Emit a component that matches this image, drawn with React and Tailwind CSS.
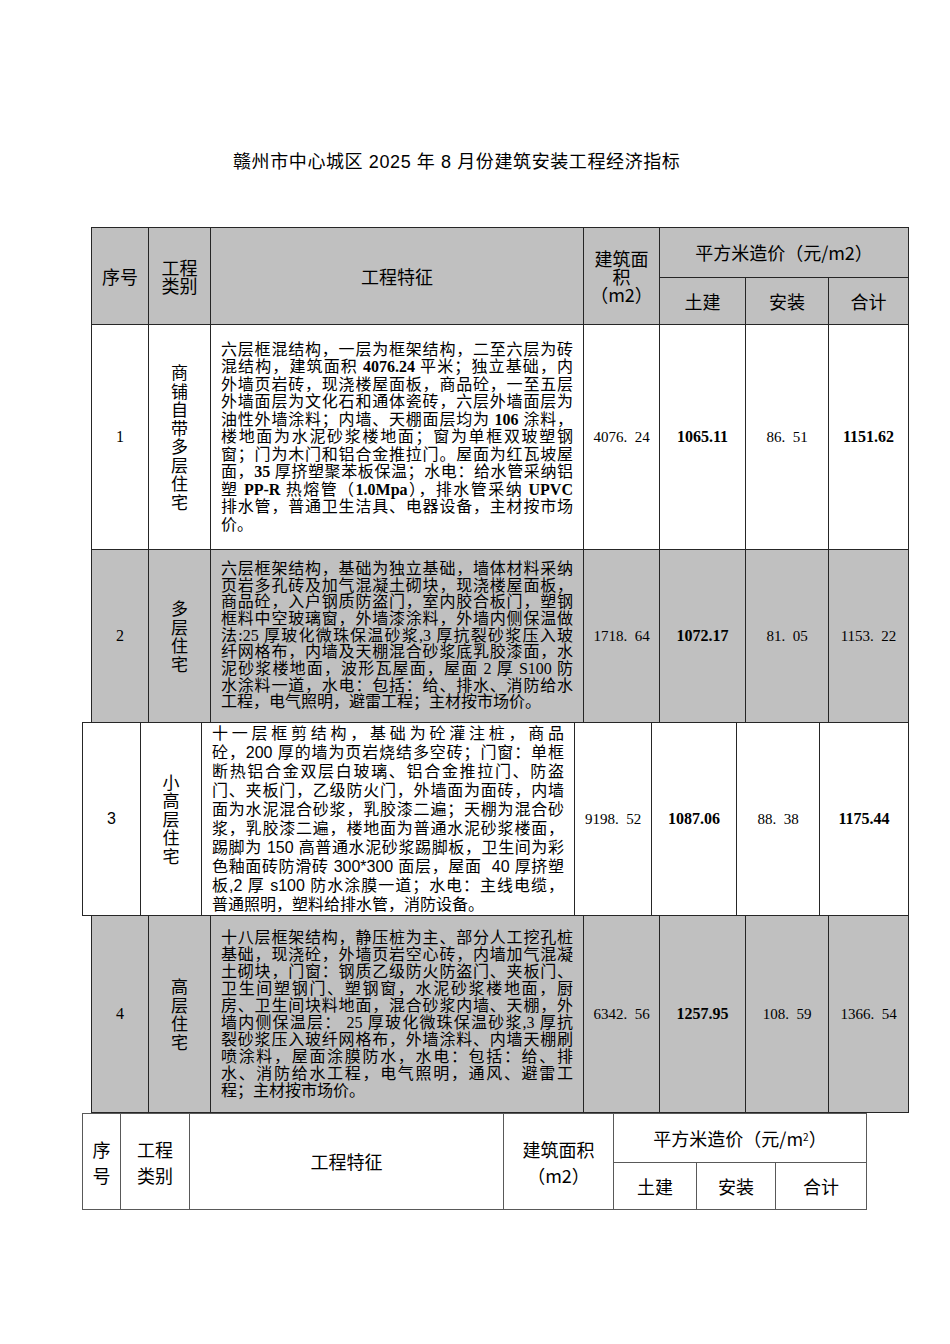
const serif = "font-['Liberation_Serif','Noto_Sans_CJK_SC',serif]";
const sans = "font-['Liberation_Sans','Noto_Sans_CJK_SC',sans-serif]";

const row1 = [
  '六层框混结构，一层为框架结构，二至六层为砖',
  <>混结构，建筑面积 <b>4076.24</b> 平米；独立基础，内</>,
  '外墙页岩砖，现浇楼屋面板，商品砼，一至五层',
  '外墙面层为文化石和通体瓷砖，六层外墙面层为',
  <>油性外墙涂料；内墙、天棚面层均为 <b>106</b> 涂料，</>,
  '楼地面为水泥砂浆楼地面；窗为单框双玻塑钢',
  '窗；门为木门和铝合金推拉门。屋面为红瓦坡屋',
  <>面，<b>35</b> 厚挤塑聚苯板保温；水电：给水管采纳铝</>,
  <>塑 <b>PP-R</b> 热熔管（<b>1.0Mpa</b>），排水管采纳 <b>UPVC</b></>,
  '排水管，普通卫生洁具、电器设备，主材按市场',
  '价。',
];

const row2 = [
  '六层框架结构，基础为独立基础，墙体材料采纳',
  '页岩多孔砖及加气混凝土砌块，现浇楼屋面板，',
  '商品砼，入户钢质防盗门，室内胶合板门，塑钢',
  '框料中空玻璃窗，外墙漆涂料，外墙内侧保温做',
  '法:25 厚玻化微珠保温砂浆,3 厚抗裂砂浆压入玻',
  '纤网格布，内墙及天棚混合砂浆底乳胶漆面，水',
  '泥砂浆楼地面，波形瓦屋面，屋面 2 厚 S100 防',
  '水涂料一道，水电：包括：给、排水、消防给水',
  '工程，电气照明，避雷工程；主材按市场价。',
];

const row3 = [
  '十一层框剪结构，基础为砼灌注桩，商品',
  '砼，200 厚的墙为页岩烧结多空砖；门窗：单框',
  '断热铝合金双层白玻璃、铝合金推拉门、防盗',
  '门、夹板门，乙级防火门，外墙面为面砖，内墙',
  '面为水泥混合砂浆，乳胶漆二遍；天棚为混合砂',
  '浆，乳胶漆二遍，楼地面为普通水泥砂浆楼面，',
  '踢脚为 150 高普通水泥砂浆踢脚板，卫生间为彩',
  '色釉面砖防滑砖 300*300 面层，屋面  40 厚挤塑',
  '板,2 厚 s100 防水涂膜一道；水电：主线电缆，',
  '普通照明，塑料给排水管，消防设备。',
];

const row4 = [
  '十八层框架结构，静压桩为主、部分人工挖孔桩',
  '基础，现浇砼，外墙页岩空心砖，内墙加气混凝',
  '土砌块，门窗：钢质乙级防火防盗门、夹板门、',
  '卫生间塑钢门、塑钢窗，水泥砂浆楼地面，厨',
  '房、卫生间块料地面，混合砂浆内墙、天棚，外',
  '墙内侧保温层： 25 厚玻化微珠保温砂浆,3 厚抗',
  '裂砂浆压入玻纤网格布，外墙涂料、内墙天棚刷',
  '喷涂料，屋面涂膜防水，水电：包括：给、排',
  '水、消防给水工程，电气照明，通风、避雷工',
  '程；主材按市场价。',
];

function Para({ lines, lh, font }) {
  return (
    <div className={`w-full px-[10px] text-[16px] text-black ${lh} ${font}`}>
      {lines.map((l, i) => (
        <div
          key={i}
          className={
            i === lines.length - 1
              ? 'whitespace-pre text-left'
              : 'whitespace-pre text-justify [text-align-last:justify]'
          }
        >
          {l}
        </div>
      ))}
    </div>
  );
}

function Vert({ text }) {
  return (
    <div className="flex flex-col items-center text-[17px] leading-[18.5px] font-['Noto_Sans_CJK_SC',sans-serif]">
      {[...text].map((c, i) => (
        <span key={i}>{c}</span>
      ))}
    </div>
  );
}

function Cell({ gray, children, className = '' }) {
  return (
    <div
      className={`flex items-center justify-center text-black ${gray ? 'bg-[#c0c0c0]' : 'bg-white'} ${className}`}
    >
      {children}
    </div>
  );
}

function Num({ children, bold }) {
  return bold ? (
    <span className={`text-[16px] font-bold ${serif}`}>{children}</span>
  ) : (
    <span className={`text-[15px] ${serif}`}>{children}</span>
  );
}

function DataRow({ gray, no, noFont, kind, lines, lh, font, area, civil, install, total, totalBold }) {
  return (
    <>
      <Cell gray={gray}>
        <span className={`text-[16px] ${noFont}`}>{no}</span>
      </Cell>
      <Cell gray={gray}>
        <Vert text={kind} />
      </Cell>
      <Cell gray={gray}>
        <Para lines={lines} lh={lh} font={font} />
      </Cell>
      <Cell gray={gray}>
        <Num>{area}</Num>
      </Cell>
      <Cell gray={gray}>
        <Num bold>{civil}</Num>
      </Cell>
      <Cell gray={gray}>
        <Num>{install}</Num>
      </Cell>
      <Cell gray={gray}>
        <Num bold={totalBold}>{total}</Num>
      </Cell>
    </>
  );
}

const hd = "text-[18px] font-['Noto_Sans_CJK_SC',sans-serif]";

export default function App() {
  return (
    <div className="min-h-screen bg-white pt-[150px] pb-[135px]">
      <div className={`ml-[233px] h-[24px] text-[18px] leading-[24px] tracking-[0.6px] text-black ${sans}`}>
        赣州市中心城区 2025 年 8 月份建筑安装工程经济指标
      </div>

      <div className="mt-[53px] ml-[91px] grid w-fit grid-cols-[56px_61px_372px_75px_85px_82px_79px] grid-rows-[49px_46px_224px_172px] gap-px bg-[#262626] p-px">
        <Cell gray className="row-span-2">
          <span className={hd}>序号</span>
        </Cell>
        <Cell gray className="row-span-2">
          <span className={`${hd} text-center leading-[18px]`}>
            工程
            <br />
            类别
          </span>
        </Cell>
        <Cell gray className="row-span-2">
          <span className={hd}>工程特征</span>
        </Cell>
        <Cell gray className="row-span-2">
          <span className={`${hd} text-center leading-[18px]`}>
            建筑面
            <br />
            积
            <br />
            （m2）
          </span>
        </Cell>
        <Cell gray className="col-span-3">
          <span className={hd}>平方米造价（元/m2）</span>
        </Cell>
        <Cell gray>
          <span className={hd}>土建</span>
        </Cell>
        <Cell gray>
          <span className={hd}>安装</span>
        </Cell>
        <Cell gray>
          <span className={hd}>合计</span>
        </Cell>

        <DataRow
          no="1"
          noFont={serif}
          kind="商铺自带多层住宅"
          lines={row1}
          lh="leading-[17.5px]"
          font={serif}
          area={'4076.\u200224'}
          civil="1065.11"
          install={'86.\u200251'}
          total="1151.62"
          totalBold
        />
        <DataRow
          gray
          no="2"
          noFont={serif}
          kind="多层住宅"
          lines={row2}
          lh="leading-[16.7px]"
          font={serif}
          area={'1718.\u200264'}
          civil="1072.17"
          install={'81.\u200205'}
          total={'1153.\u200222'}
        />
      </div>

      <div className="-mt-px ml-[82px] grid w-fit grid-cols-[57px_60px_372px_76px_84px_82px_88px] grid-rows-[192px] gap-px bg-[#262626] p-px">
        <DataRow
          no="3"
          noFont={sans}
          kind="小高层住宅"
          lines={row3}
          lh="leading-[19px]"
          font={sans}
          area={'9198.\u200252'}
          civil="1087.06"
          install={'88.\u200238'}
          total="1175.44"
          totalBold
        />
      </div>

      <div className="-mt-px ml-[91px] grid w-fit grid-cols-[56px_61px_372px_75px_85px_82px_79px] grid-rows-[196px] gap-px bg-[#262626] p-px">
        <DataRow
          gray
          no="4"
          noFont={serif}
          kind="高层住宅"
          lines={row4}
          lh="leading-[17.1px]"
          font={serif}
          area={'6342.\u200256'}
          civil="1257.95"
          install={'108.\u200259'}
          total={'1366.\u200254'}
        />
      </div>

      <div className="ml-[82px] grid w-fit grid-cols-[37px_68px_313px_109px_82px_78px_90px] grid-rows-[48px_46px] gap-px bg-[#595959] p-px">
        <Cell className="row-span-2">
          <span className={`${hd} text-center leading-[26px]`}>
            序
            <br />号
          </span>
        </Cell>
        <Cell className="row-span-2">
          <span className={`${hd} text-center leading-[26px]`}>
            工程
            <br />
            类别
          </span>
        </Cell>
        <Cell className="row-span-2">
          <span className={hd}>工程特征</span>
        </Cell>
        <Cell className="row-span-2">
          <span className={`${hd} text-center leading-[26px]`}>
            建筑面积
            <br />
            （m2）
          </span>
        </Cell>
        <Cell className="col-span-3">
          <span className={hd}>
            平方米造价（元/m<sup className="text-[10px]">2</sup>）
          </span>
        </Cell>
        <Cell>
          <span className={hd}>土建</span>
        </Cell>
        <Cell>
          <span className={hd}>安装</span>
        </Cell>
        <Cell>
          <span className={hd}>合计</span>
        </Cell>
      </div>
    </div>
  );
}
